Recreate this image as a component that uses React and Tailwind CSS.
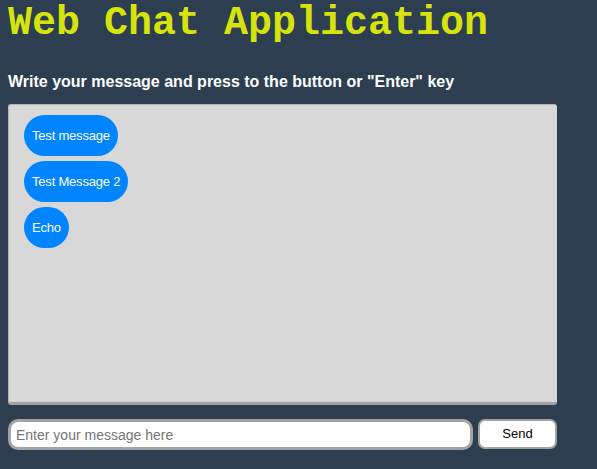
import React, { useState } from "react";

const App = () => {
    const [messages, setMessages] = useState(["Test message", "Test Message 2", "Echo"]);
    const [text, setText] = useState("");

    const send = () => {
        if (text.trim() === "") return;
        setMessages((prev) => [...prev, text]);
        setText("");
    };

    return (
        <div className="bg-[#2c3e50] w-full h-[469px] px-2 font-['Liberation_Sans',Arial,sans-serif]">
            <h1 className="text-[#d7e30d] font-bold text-[40px] leading-[48px] font-['Liberation_Mono','Courier_New',monospace]">
                Web Chat Application
            </h1>
            <p className="text-white font-bold text-base mt-[22px]">
                Write your message and press to the button or "Enter" key
            </p>

            {/* Chat window */}
            <div className="mt-[10px] w-[549px] h-[301px] bg-[#d8d8d8] rounded-[3px] border-l border-t border-[#b5b5b5] border-b-[3px] border-b-[#a2a2a2] px-[15px] pt-[10px] flex flex-col items-start gap-[5px]">
                {messages.map((m, i) => (
                    <div key={i} className="bg-[#0084ff] text-white text-[13px] tracking-[-0.2px] h-[41px] px-2 flex items-center rounded-full">
                        {m}
                    </div>
                ))}
            </div>

            <form
                className="flex gap-[5px] mt-[14px]"
                onSubmit={(e) => {
                    e.preventDefault();
                    send();
                }}
            >
                <input
                    type="text"
                    value={text}
                    onChange={(e) => setText(e.target.value)}
                    placeholder="Enter your message here"
                    className="w-[465px] h-[31px] bg-white border-[3px] border-[#a3a3a3] rounded-[10px] px-[5px] text-sm text-black placeholder:text-[#757575] outline-none"
                />
                <button
                    type="submit"
                    className="w-[79px] h-[30px] bg-white border-2 border-[#a3a3a3] rounded-[7px] text-[13px] text-black"
                >
                    Send
                </button>
            </form>
        </div>
    );
};

export default App;
